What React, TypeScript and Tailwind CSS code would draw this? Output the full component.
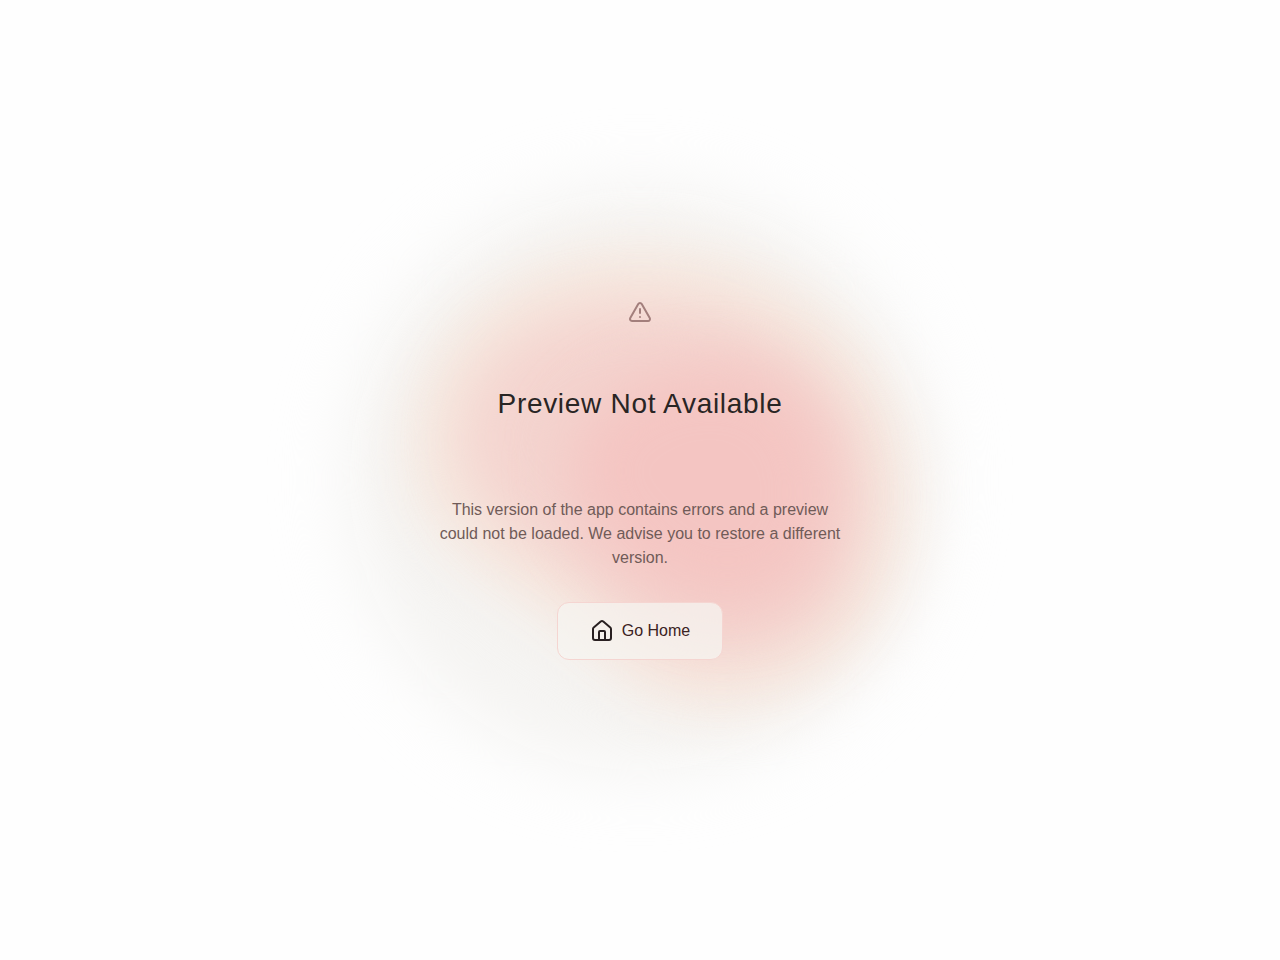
import { House, TriangleAlert } from "lucide-react";

function Glow() {
  return (
    <div aria-hidden="true" className="pointer-events-none absolute inset-0 grid place-items-center overflow-hidden">
      <svg width="960" height="960" viewBox="0 0 960 960">
        <defs>
          <filter id="halo" x="-50%" y="-50%" width="200%" height="200%" colorInterpolationFilters="sRGB">
            <feGaussianBlur stdDeviation="34" />
          </filter>
          <filter id="fringe" x="-50%" y="-50%" width="200%" height="200%" colorInterpolationFilters="sRGB">
            <feGaussianBlur stdDeviation="28" />
          </filter>
          <filter id="core" x="-50%" y="-50%" width="200%" height="200%" colorInterpolationFilters="sRGB">
            <feGaussianBlur stdDeviation="30" />
          </filter>
        </defs>
        <circle cx="480" cy="480" r="292" fill="#f5f4f2" filter="url(#halo)" />
        <path
          d="M248 450C248 335 360 248 480 248C640 248 752 365 752 495C752 620 665 710 555 710C480 710 445 650 385 612C315 568 248 530 248 450Z"
          fill="#f6e8df"
          filter="url(#fringe)"
        />
        <path
          d="M300 440C300 350 390 302 480 302C600 302 706 380 706 492C706 597 650 662 560 662C490 662 460 612 405 572C355 535 300 505 300 440Z"
          fill="#f4d4cf"
          filter="url(#fringe)"
        />
        <path
          d="M410 465C410 410 480 365 555 365C630 365 674 420 674 490C674 565 635 610 570 610C515 610 480 580 450 550C425 525 410 500 410 465Z"
          fill="#f4c5c2"
          filter="url(#core)"
        />
      </svg>
    </div>
  );
}

export default function App() {
  return (
    <main className="relative flex min-h-screen flex-col items-center justify-center bg-[#fefefe] px-4 font-['Liberation_Sans',Arial,sans-serif]">
      <Glow />
      <div className="relative flex w-full max-w-md flex-col items-center text-center">
        <TriangleAlert className="size-6 text-[#a37f7c]" strokeWidth={2} aria-hidden="true" />
        <h1 className="mt-15 text-[28px] leading-10 tracking-wide text-[#292524]">Preview Not Available</h1>
        <p className="mt-[74px] px-4 text-base leading-6 text-[#705b58]">
          This version of the app contains errors and a preview could not be loaded. We advise you to restore a different version.
        </p>
        <a
          href="/"
          className="mt-8 flex items-center gap-2 rounded-xl border border-[#f5d5d1] bg-[#f6f4f0]/75 px-8 py-4 text-base leading-6 text-[#3b2222]"
        >
          <House className="size-6 text-[#292021]" strokeWidth={2} aria-hidden="true" />
          Go Home
        </a>
      </div>
    </main>
  );
}
